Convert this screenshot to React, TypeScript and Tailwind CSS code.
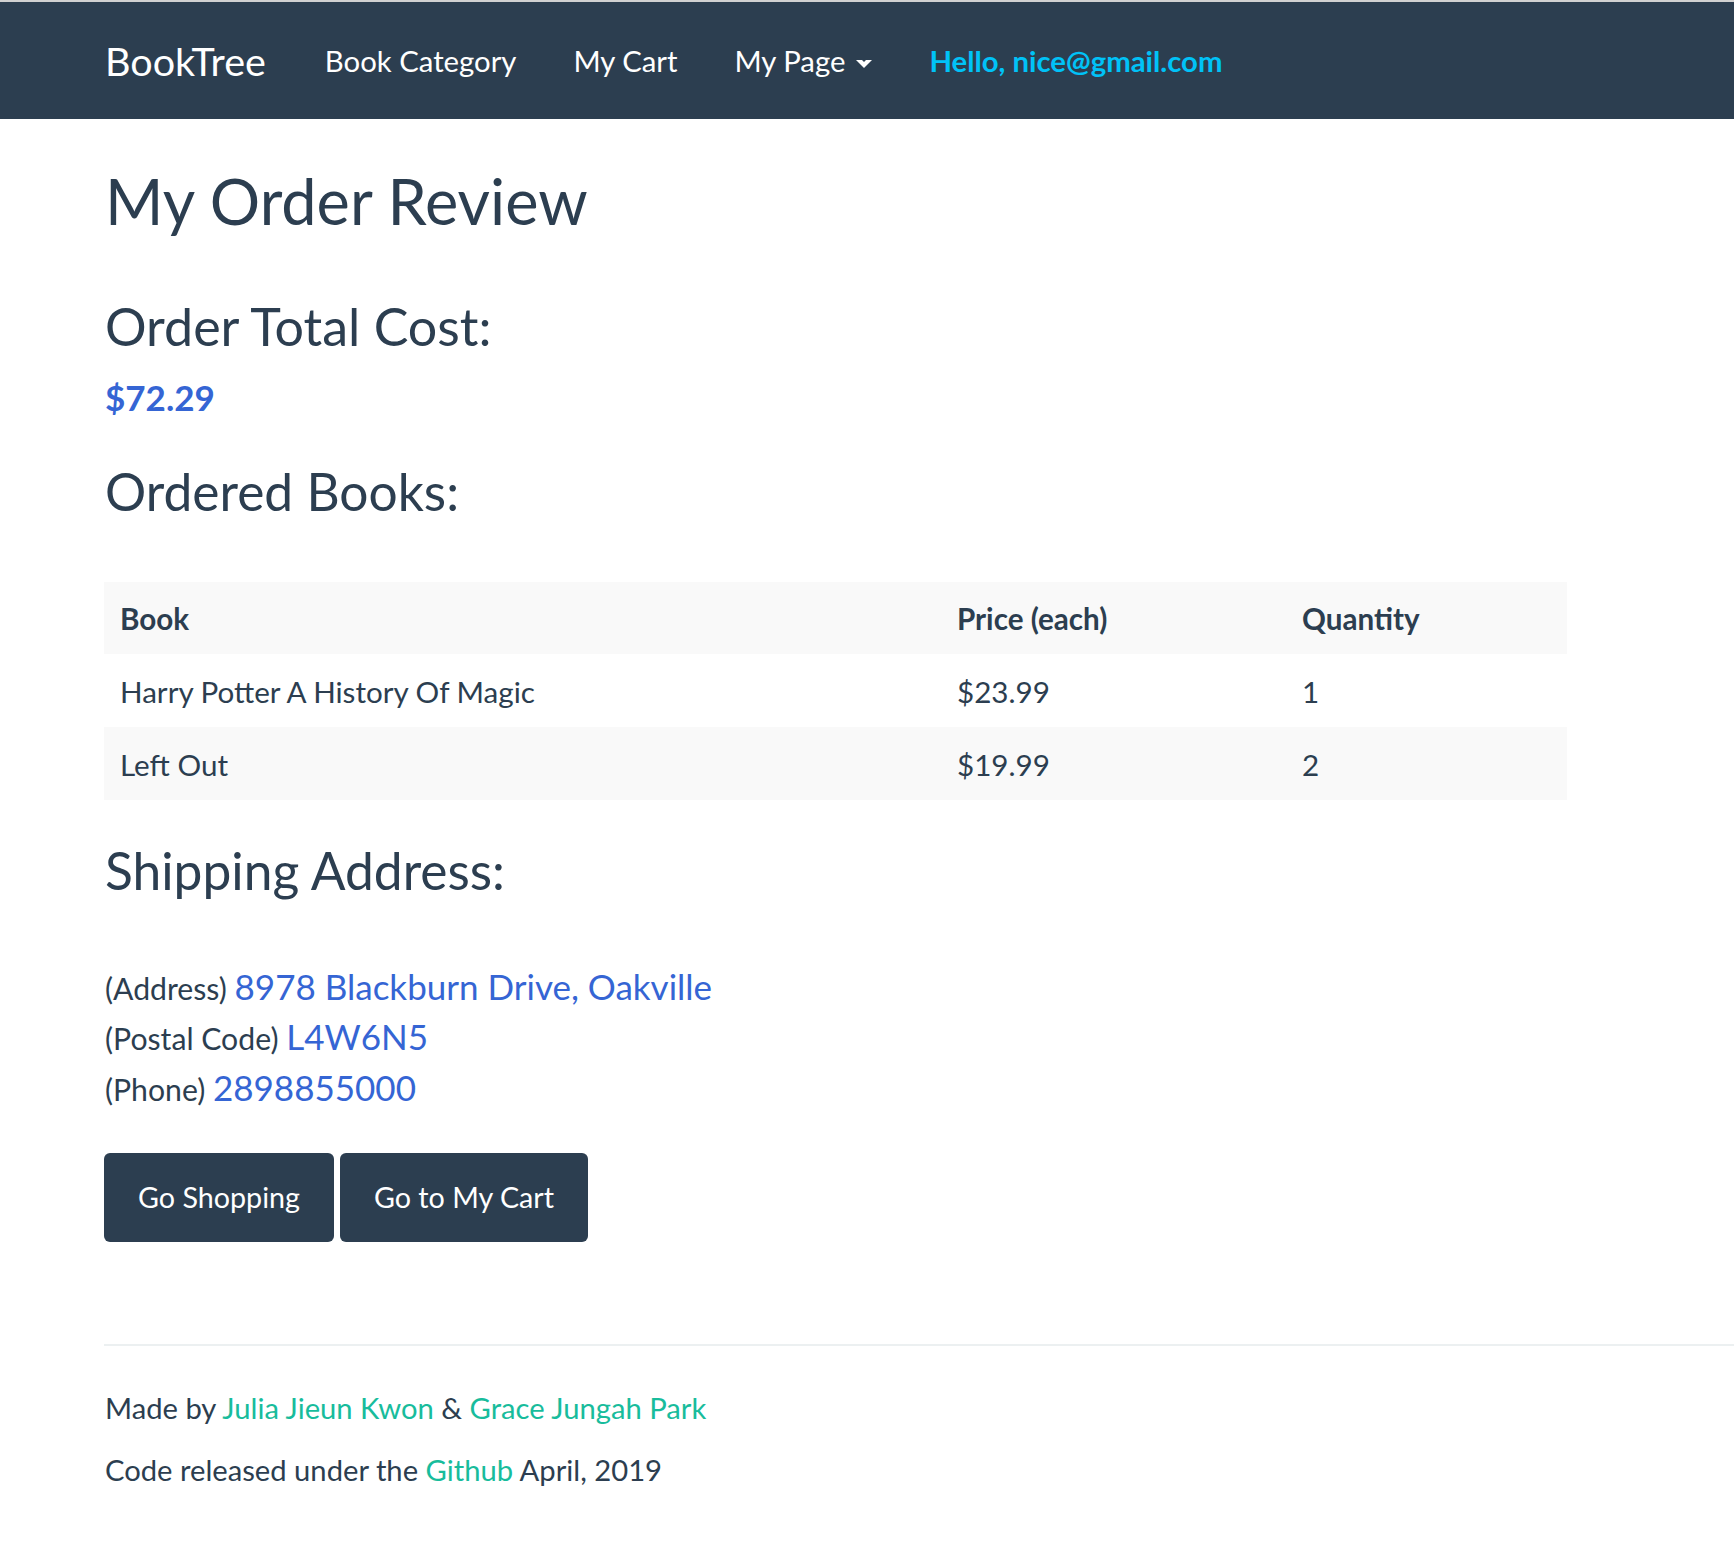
import React from 'react';

const rows = [
  { title: 'Harry Potter A History Of Magic', price: '$23.99', qty: 1 },
  { title: 'Left Out', price: '$19.99', qty: 2 },
];

const Navbar: React.FC = () => {
  return (
    <nav className="h-[117px] bg-[#2c3e50] flex items-center pl-[105px] gap-[57px] text-white">
      <span className="text-[39.5px] leading-none">BookTree</span>
      <span className="text-[29.3px] ml-[2px]">Book Category</span>
      <span className="text-[29.3px]">My Cart</span>
      <span className="text-[29.3px] flex items-center">
        My Page
        <svg className="ml-[11px] mt-[6px]" width="16" height="8" viewBox="0 0 16 8">
          <path d="M0 0 L6 0 L8 2 L10 0 L16 0 L8 8 Z" fill="#ffffff" />
        </svg>
      </span>
      <span className="text-[29.3px] font-bold text-[#00c2f7]">Hello, nice@gmail.com</span>
    </nav>
  );
};

const App: React.FC = () => {
  return (
    <div className="min-h-[1559px] bg-white text-[#2c3e50] font-['Lato','Noto_Sans',sans-serif]">
      <div className="h-[2px] bg-[#d1d1d1]" />
      <Navbar />

      <main className="pl-[105px] pr-[167px]">
        <h1 className="text-[63px] leading-[1.2] mt-[44px]">My Order Review</h1>

        <h2 className="text-[52px] leading-[1.2] mt-[56px]">Order Total Cost:</h2>
        <div className="text-[35px] leading-[1.2] font-bold text-[#3565d4] mt-[19px]">$72.29</div>

        <h2 className="text-[51.5px] leading-[1.2] mt-[43px]">Ordered Books:</h2>

        <table className="mt-[59px] -ml-px w-[1463px] text-[29.6px] leading-[42px] border-collapse">
          <thead>
            <tr className="bg-[#f9f9f9] h-[72px]">
              <th className="w-[837px] text-left font-bold px-[16px] pt-[3px]">Book</th>
              <th className="w-[345px] text-left font-bold px-[16px] pt-[3px]">Price (each)</th>
              <th className="text-left font-bold px-[16px] pt-[3px]">Quantity</th>
            </tr>
          </thead>
          <tbody>
            {rows.map((r, i) => (
              <tr key={r.title} className={`h-[73px] ${i % 2 === 1 ? 'bg-[#f9f9f9]' : 'bg-white'}`}>
                <td className="px-[16px] pt-[3px]">{r.title}</td>
                <td className="px-[16px] pt-[3px]">{r.price}</td>
                <td className="px-[16px] pt-[3px]">{r.qty}</td>
              </tr>
            ))}
          </tbody>
        </table>

        <h2 className="text-[51.5px] leading-[1.2] mt-[40px]">Shipping Address:</h2>

        <div className="mt-[60px] text-[30.2px] leading-[48.5px]">
          <div>
            (Address) <span className="text-[35px] text-[#3565d4]">8978 Blackburn Drive, Oakville</span>
          </div>
          <div>
            (Postal Code) <span className="text-[35px] text-[#3565d4]">L4W6N5</span>
          </div>
          <div>
            (Phone) <span className="text-[35px] text-[#3565d4]">2898855000</span>
          </div>
        </div>

        <div className="mt-[40px] flex gap-[6px] -ml-px">
          <button className="h-[89px] px-[34px] rounded-[6px] bg-[#2c3e50] text-white text-[28.7px]">
            Go Shopping
          </button>
          <button className="h-[89px] px-[34px] rounded-[6px] bg-[#2c3e50] text-white text-[28.7px]">
            Go to My Cart
          </button>
        </div>
      </main>

      <footer className="mt-[102px] pl-[104px]">
        <div className="h-[2px] bg-[#ecf0f1]" />
        <div className="pl-px pt-[41px] text-[29.2px] leading-[42px]">
          <p>
            Made by <a className="text-[#18bc9c]">Julia Jieun Kwon</a> &amp;{' '}
            <a className="text-[#18bc9c]">Grace Jungah Park</a>
          </p>
          <p className="mt-[20px]">
            Code released under the <a className="text-[#18bc9c]">Github</a> April, 2019
          </p>
        </div>
      </footer>
    </div>
  );
};

export default App;
